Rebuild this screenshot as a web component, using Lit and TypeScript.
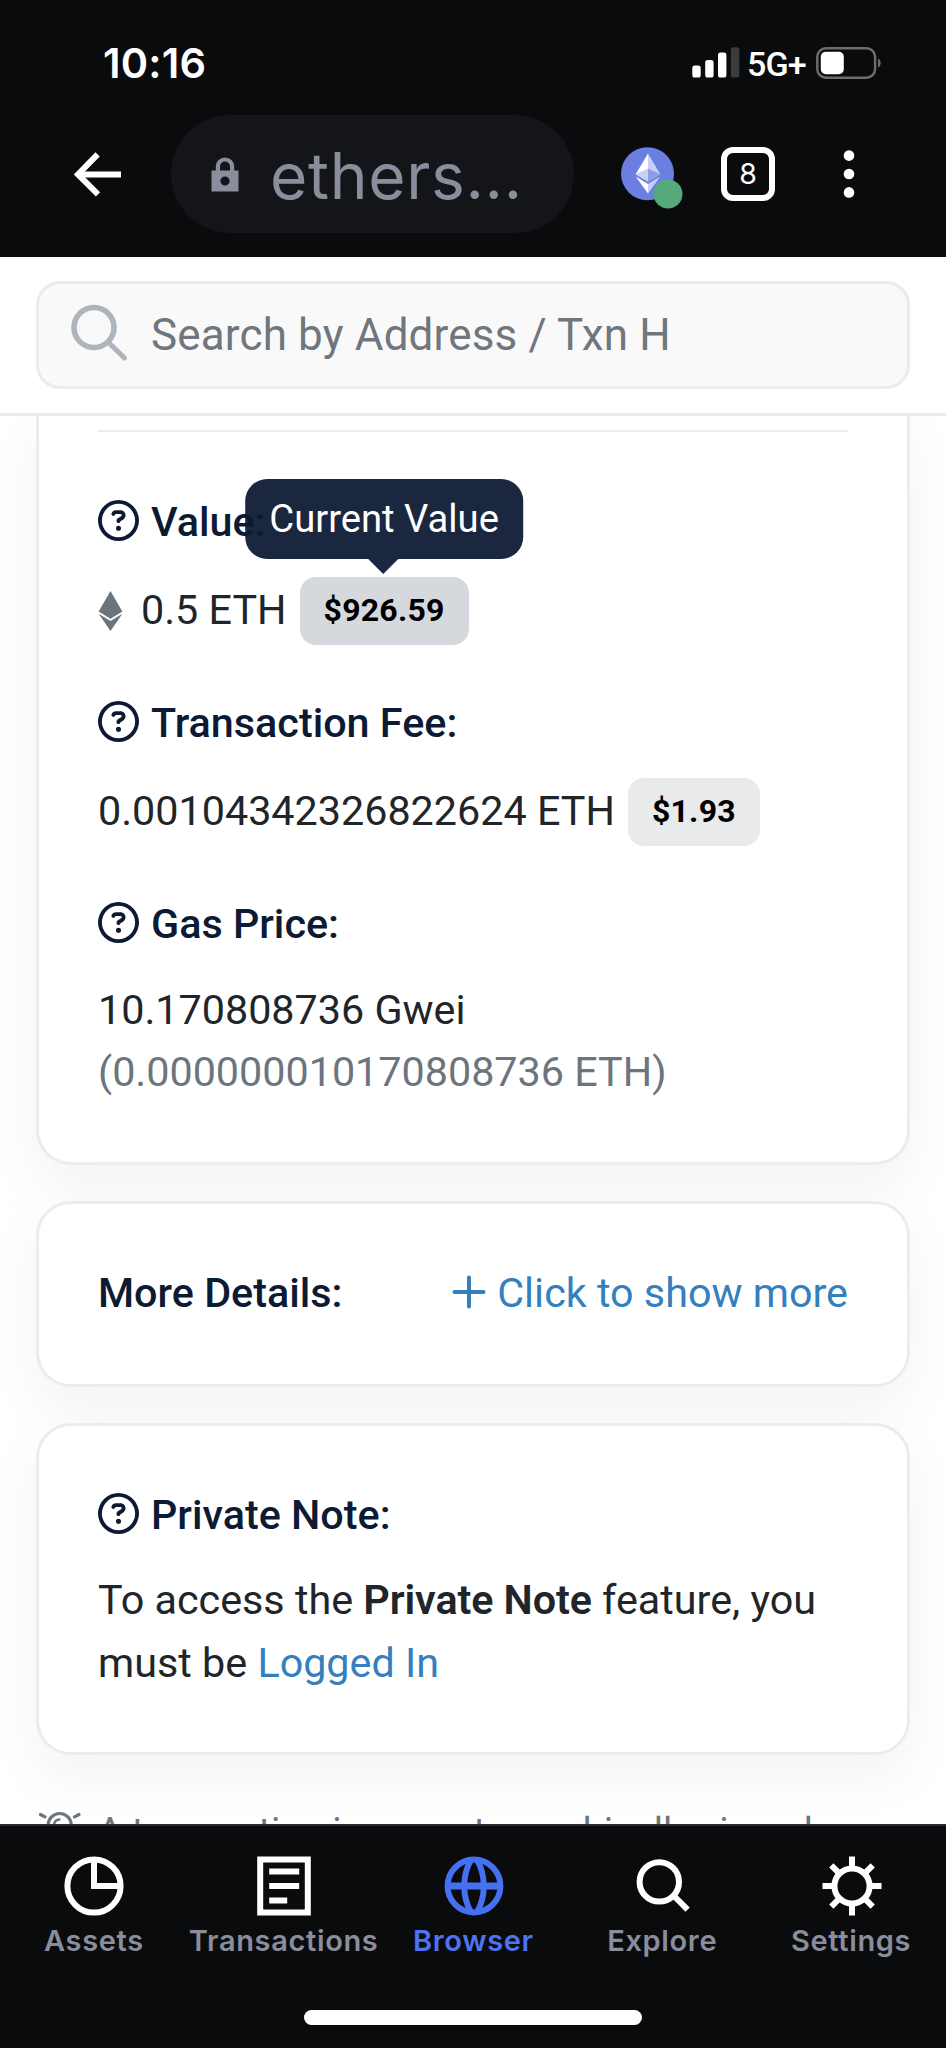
import { LitElement, html, css, svg, TemplateResult } from "lit";
import { customElement, property } from "lit/decorators.js";
import { classMap } from "lit/directives/class-map.js";

/* ---------- Status bar ---------- */
@customElement("status-bar")
export class StatusBar extends LitElement {
  static styles = css`
    :host {
      display: flex;
      justify-content: space-between;
      align-items: center;
      box-sizing: border-box;
      height: 115px;
      padding: 11px 64px 0 103px;
      color: #fff;
      font-family: Inter, sans-serif;
    }
    .time {
      font-size: 41.5px;
      line-height: 50px;
      font-weight: 600;
      letter-spacing: 0.2px;
    }
    .right {
      display: flex;
      align-items: center;
    }
    .net {
      box-sizing: border-box;
      width: 76px;
      padding-left: 7px;
      font: 500 34px/40px Roboto, sans-serif;
      letter-spacing: -0.9px;
      margin-top: 2px;
      white-space: nowrap;
    }
    svg {
      display: block;
    }
  `;
  render() {
    return html`
      <span class="time">10:16</span>
      <div class="right">
        <svg width="48" height="32" viewBox="0 0 48 32" fill="#fff">
          <rect x="0.3" y="18.5" width="8.4" height="12" rx="2.6" />
          <rect x="13.2" y="13" width="8.4" height="17.5" rx="2.6" />
          <rect x="26" y="5.5" width="8.4" height="25" rx="2.6" />
          <rect x="38.9" y="0.3" width="8.4" height="30.2" rx="2.6" fill="#3b3c3e" />
        </svg>
        <span class="net">5G+</span>
        <svg width="66" height="32" viewBox="0 0 66 32">
          <rect x="1.3" y="1.3" width="57.8" height="29.4" rx="8.5" fill="none" stroke="#6c6d6f" stroke-width="2.4" />
          <rect x="4.8" y="4.8" width="23" height="22.4" rx="5" fill="#fff" />
          <path d="M62 11.5c3.6 1.6 3.6 7.4 0 9z" fill="#6c6d6f" />
        </svg>
      </div>
    `;
  }
}

/* ---------- Browser toolbar ---------- */
@customElement("browser-toolbar")
export class BrowserToolbar extends LitElement {
  static styles = css`
    :host {
      display: flex;
      align-items: center;
      box-sizing: border-box;
      height: 118px;
      padding-left: 73px;
      font-family: Inter, sans-serif;
    }
    svg {
      display: block;
      flex: none;
    }
    .pill {
      display: flex;
      align-items: center;
      box-sizing: border-box;
      width: 403px;
      height: 118px;
      margin-left: 49px;
      padding-left: 40px;
      border-radius: 59px;
      background: #141519;
    }
    .url {
      margin-left: 31px;
      color: #8a8d9b;
      font-size: 64px;
      line-height: 78px;
      letter-spacing: 0.7px;
      padding-top: 3px;
    }
    .network {
      margin: 7px 0 0 46px;
    }
    .tabs {
      display: grid;
      place-items: center;
      box-sizing: border-box;
      width: 54px;
      height: 54px;
      margin-left: 37px;
      border: 6px solid #fff;
      border-radius: 12px;
      color: #fff;
      font-size: 28.5px;
      font-weight: 400;
      line-height: 34px;
      padding-bottom: 1px;
    }
    .menu {
      margin-left: 66.5px;
    }
  `;
  render() {
    return html`
      <svg width="49" height="46" viewBox="0 0 49 46" fill="none" stroke="#fff" stroke-width="6">
        <path d="M48 23.4H5" />
        <path d="M24.6 3.4 5 23.4l20 20" />
      </svg>
      <div class="pill">
        <svg width="28" height="36" viewBox="0 0 28 36">
          <path d="M6.9 16V10.6a7.1 7.1 0 0 1 14.2 0V16" fill="none" stroke="#8a8d9b" stroke-width="4.2" />
          <path d="M0.5 14.6h27V35.4h-27zM14 20.4a4.6 4.6 0 1 0 0 9.2a4.6 4.6 0 1 0 0-9.2z" fill="#8a8d9b" fill-rule="evenodd" />
        </svg>
        <span class="url">ethers...</span>
      </div>
      <svg class="network" width="64" height="63" viewBox="0 0 64 63">
        <circle cx="27.5" cy="27.7" r="26.5" fill="#6b7fe3" />
        <path d="M28 7.5 15.7 28.2 28 35.4z" fill="#fff" />
        <path d="M28 7.5 40.3 28.2 28 35.4z" fill="#c8cff5" />
        <path d="M28 22.5 15.7 28.2 28 35.4z" fill="#c8cff5" />
        <path d="M28 22.5 40.3 28.2 28 35.4z" fill="#8f9de9" />
        <path d="M15.7 30.6 28 37.9V47.5z" fill="#fff" />
        <path d="M40.3 30.6 28 37.9V47.5z" fill="#c8cff5" />
        <circle cx="48" cy="48" r="14.5" fill="#56a97a" />
      </svg>
      <div class="tabs">8</div>
      <svg class="menu" width="14" height="52" viewBox="0 0 14 52" fill="#fff">
        <circle cx="7" cy="7.6" r="5.3" />
        <circle cx="7" cy="26" r="5.3" />
        <circle cx="7" cy="44.4" r="5.3" />
      </svg>
    `;
  }
}

/* ---------- Card label with help icon ---------- */
@customElement("field-label")
export class FieldLabel extends LitElement {
  @property() text = "";
  static styles = css`
    :host {
      display: flex;
      align-items: center;
      gap: 12px;
      height: 62.4px;
      color: #0c1a33;
      font: 500 41.3px/62.4px Roboto, sans-serif;
    }
    svg {
      display: block;
      margin-bottom: 2.4px;
    }
    span {
      margin-top: 1.4px;
    }
  `;
  render() {
    return html`
      <svg width="41" height="41" viewBox="0 0 512 512" fill="currentColor">
        <path
          d="M464 256A208 208 0 1 0 48 256a208 208 0 1 0 416 0zM0 256a256 256 0 1 1 512 0A256 256 0 1 1 0 256zm169.8-90.7c7.9-22.3 29.1-37.3 52.8-37.3l58.3 0c34.9 0 63.1 28.3 63.1 63.1c0 22.6-12.1 43.5-31.7 54.8L280 264.4c-.2 13-10.9 23.6-24 23.6c-13.3 0-24-10.7-24-24l0-13.5c0-8.6 4.6-16.5 12.1-20.8l44.3-25.4c4.7-2.7 7.6-7.7 7.6-13.1c0-8.4-6.8-15.1-15.1-15.1l-58.3 0c-3.4 0-6.4 2.1-7.5 5.3l-.4 1.2c-4.4 12.5-18.2 19-30.7 14.6s-19-18.2-14.6-30.7l.4-1.2zM224 352a32 32 0 1 1 64 0 32 32 0 1 1-64 0z"
        />
      </svg>
      <span>${this.text}</span>
    `;
  }
}

/* ---------- Bottom navigation ---------- */
interface Tab {
  label: string;
  icon: TemplateResult;
  active?: boolean;
}

const TABS: Tab[] = [
  {
    label: "Assets",
    icon: svg`<circle cx="30" cy="30" r="26.6"/><path d="M30 4v26h26"/>`,
  },
  {
    label: "Transactions",
    icon: svg`<path d="M6.2 3.4h47.6v53.2H6.2zM15.2 15.4h30M15.2 30h30M15.2 44.6h18"/>`,
  },
  {
    label: "Browser",
    active: true,
    icon: svg`<circle cx="30" cy="30" r="26.4"/><path d="M3 30h54" stroke-width="7"/><path d="M27 4C18 19 18 41 27 56M33 4c9 15 9 37 0 52"/>`,
  },
  {
    label: "Explore",
    icon: svg`<circle cx="26.3" cy="25.9" r="19.7"/><path d="M40 39 54.6 53.6"/>`,
  },
  {
    label: "Settings",
    icon: svg`<circle cx="30" cy="30" r="17.6"/><path d="M30 .5v13M30 46.5v13M.5 30h13M46.5 30h13M9.3 9.3l8.5 8.5M42.2 42.2l8.5 8.5M50.7 9.3l-8.5 8.5M17.8 42.2l-8.5 8.5"/>`,
  },
];

@customElement("bottom-nav")
export class BottomNav extends LitElement {
  static styles = css`
    :host {
      display: flex;
      flex-direction: column;
      align-items: center;
      box-sizing: border-box;
      height: 224px;
      border-top: 2px solid #2a2b2f;
      background: #0a0b0d;
      font-family: Inter, sans-serif;
    }
    .tabs {
      display: grid;
      grid-template-columns: repeat(5, 1fr);
      width: 100%;
      padding-top: 30px;
    }
    .tab {
      display: flex;
      flex-direction: column;
      align-items: center;
      color: #8a8d9b;
      font-size: 29px;
      line-height: 36px;
      font-weight: 600;
      letter-spacing: 0.65px;
      white-space: nowrap;
    }
    .tab span {
      margin-right: 1px;
    }
    .tab svg {
      display: block;
      margin-bottom: 7px;
      stroke: #fff;
    }
    .tab.active {
      color: #4c73f2;
    }
    .tab.active svg {
      stroke: #4670f2;
    }
    .home {
      width: 338px;
      height: 15px;
      margin-top: 50.5px;
      border-radius: 8px;
      background: #fff;
    }
  `;
  render() {
    return html`
      <div class="tabs">
        ${TABS.map(
          (t) => html`
            <div class=${classMap({ tab: true, active: !!t.active })}>
              <svg width="60" height="60" viewBox="0 0 60 60" fill="none" stroke-width="6">${t.icon}</svg>
              <span>${t.label}</span>
            </div>
          `
        )}
      </div>
      <div class="home"></div>
    `;
  }
}

/* ---------- App ---------- */
@customElement("app-root")
export class AppRoot extends LitElement {
  static styles = css`
    :host {
      display: flex;
      flex-direction: column;
      width: 946px;
      height: 2048px;
      overflow: hidden;
      background: #fff;
      color: #212529;
      font: 400 41.3px/62.4px Roboto, sans-serif;
    }
    svg {
      display: block;
      flex: none;
    }
    .chrome {
      flex: none;
      height: 257px;
      background: #0a0b0d;
    }
    .search {
      flex: none;
      box-sizing: border-box;
      height: 158.5px;
      padding: 24px 36px 0;
      border-bottom: 3px solid #e9eaee;
      background: #fff;
    }
    .box {
      display: flex;
      align-items: center;
      box-sizing: border-box;
      height: 108px;
      padding-left: 31px;
      border: 3px solid #eaebee;
      border-radius: 24px;
      background: #f9f9fa;
      color: #6f767d;
      font-size: 44px;
      letter-spacing: 0.15px;
    }
    .box svg {
      margin: -4px 21px 0 0;
    }
    .page {
      flex: 1;
      min-height: 0;
      overflow: hidden;
      padding: 0 36px;
    }
    .card {
      box-sizing: border-box;
      padding: 0 59px;
      border: 3px solid #ebecef;
      border-radius: 35px;
      background: #fff;
      box-shadow: 0 21px 50px rgba(189, 197, 209, 0.2);
    }
    .first {
      height: 749px;
      padding-top: 14px;
      border-top: none;
      border-top-left-radius: 0;
      border-top-right-radius: 0;
    }
    .rule {
      height: 2.5px;
      margin-bottom: 58.3px;
      background: #ebecef;
    }
    .row {
      display: flex;
      align-items: center;
      height: 68px;
      margin: 24.3px 0 46.4px;
    }
    .row > span {
      margin-top: -1px;
    }
    .row svg {
      margin-right: 18px;
    }
    .badge {
      position: relative;
      box-sizing: border-box;
      height: 68px;
      margin-left: 13px;
      padding: 0 24px;
      border-radius: 16px;
      background: #e9eaec;
      color: #000;
      font-size: 32px;
      line-height: 67px;
      font-weight: 700;
      letter-spacing: 0.25px;
    }
    .badge.hover {
      background: #d5d8dd;
    }
    .tip {
      position: absolute;
      left: 50%;
      bottom: 86px;
      transform: translateX(-50%);
      padding: 0 24px;
      border-radius: 22px;
      background: rgba(12, 26, 51, 0.94);
      color: #fff;
      font-size: 38.2px;
      font-weight: 400;
      line-height: 80px;
      letter-spacing: 0;
      white-space: nowrap;
    }
    .tip::after {
      content: "";
      position: absolute;
      left: 50%;
      top: 100%;
      margin-left: -15.5px;
      border: 15.5px solid transparent;
      border-top-color: rgba(12, 26, 51, 0.94);
      border-bottom: none;
    }
    .gas {
      margin-top: 23.8px;
    }
    .muted {
      color: #6c757d;
    }
    .more {
      display: flex;
      justify-content: space-between;
      height: 186px;
      margin-top: 36.5px;
      padding-top: 58px;
    }
    .more b {
      color: #0c1a33;
      font-weight: 500;
    }
    .link {
      color: #357fbd;
    }
    .show {
      display: flex;
      gap: 11.5px;
      height: 62px;
    }
    .show svg {
      margin-top: 13px;
    }
    .note {
      height: 332.5px;
      margin-top: 35.5px;
      padding-top: 57.5px;
    }
    .note p {
      margin: 23.8px 0 0;
    }
    .note strong {
      font-weight: 600;
      letter-spacing: -0.1px;
    }
    .foot {
      display: flex;
      gap: 15.5px;
      margin-top: 50px;
      padding-left: 2px;
      color: #6c757d;
      font-size: 38.1px;
      line-height: 54px;
      white-space: nowrap;
    }
    .foot svg {
      margin-top: 4px;
    }
  `;

  render() {
    return html`
      <div class="chrome">
        <status-bar></status-bar>
        <browser-toolbar></browser-toolbar>
      </div>
      <div class="search">
        <div class="box">
          <svg width="60" height="60" viewBox="0 0 60 60" fill="none" stroke="#adb4bc" stroke-linecap="round">
            <circle cx="24" cy="24.5" r="20" stroke-width="5.6" />
            <path d="M38.5 39.5 54.5 55" stroke-width="5" />
          </svg>
          <span>Search by Address / Txn H</span>
        </div>
      </div>
      <div class="page">
        <div class="card first">
          <div class="rule"></div>
          <field-label text="Value:"></field-label>
          <div class="row">
            <svg width="25" height="40" viewBox="0 0 320 512" fill="#6c757d">
              <path d="M311.9 260.8L160 353.6 8 260.8 160 0l151.9 260.8zM160 383.4L8 290.6 160 512l152-221.4-152 92.8z" />
            </svg>
            <span>0.5 ETH</span>
            <div class="badge hover">$926.59<div class="tip">Current Value</div></div>
          </div>
          <field-label text="Transaction Fee:"></field-label>
          <div class="row">
            <span>0.00104342326822624 ETH</span>
            <div class="badge">$1.93</div>
          </div>
          <field-label text="Gas Price:"></field-label>
          <div class="gas">
            <div>10.170808736 Gwei</div>
            <div class="muted">(0.000000010170808736 ETH)</div>
          </div>
        </div>
        <div class="card more">
          <b>More Details:</b>
          <div class="show link">
            <svg width="34" height="34" viewBox="0 0 34 34" fill="none" stroke="currentColor" stroke-width="4" stroke-linecap="round">
              <path d="M17 2.5v29M2.5 17h29" />
            </svg>
            <span>Click to show more</span>
          </div>
        </div>
        <div class="card note">
          <field-label text="Private Note:"></field-label>
          <p>To access the <strong>Private Note</strong> feature, you must be <span class="link">Logged In</span></p>
        </div>
        <div class="foot">
          <svg width="44" height="44" viewBox="0 0 44 44" fill="none" stroke="#6c757d" stroke-width="3.2" stroke-linecap="round">
            <path d="M16 36c0-5-5.8-9-5.8-20a11.5 11.5 0 0 1 23 0c0 11-5.8 15-5.8 20z" />
            <path d="M16 15.5a6 6 0 0 1 5.5-5" stroke-width="2.4" />
            <path d="M2.5 5.5l4.5 2.3M41 5.5l-4.5 2.3M0.5 17h3M40 17h3" />
          </svg>
          <span>A transaction is a cryptographically signed</span>
        </div>
      </div>
      <bottom-nav></bottom-nav>
    `;
  }
}
